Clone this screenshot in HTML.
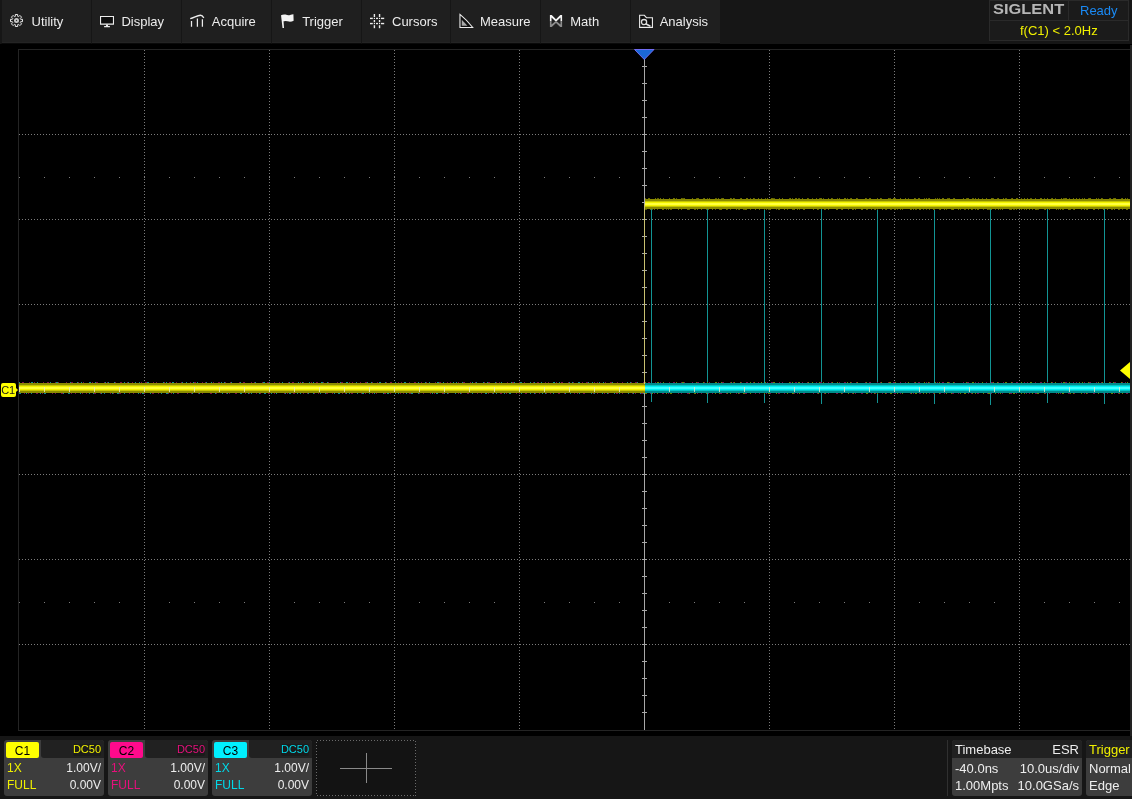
<!DOCTYPE html>
<html><head><meta charset="utf-8">
<style>
*{margin:0;padding:0;box-sizing:border-box}
html,body{width:1132px;height:799px;overflow:hidden;background:#000;font-family:"Liberation Sans",sans-serif;}
.abs{position:absolute}
#bar{position:absolute;left:0;top:0;width:1132px;height:44px;background:#161616}
.btn{position:absolute;top:0;height:44px;background:#1f1f1f;border-left:1px solid #161616;border-bottom:1px solid #0a0a0a}
.btn::after{content:"";position:absolute;left:0;right:0;top:42px;height:1px;background:#242424}
.btn span{position:absolute;top:15px;font-size:13px;line-height:13px;color:#ececec;white-space:nowrap}
.t{position:absolute;white-space:nowrap;line-height:12px}
.chbox{position:absolute;top:740px;width:100px;height:56px;background:#3d3d3d;border-radius:3px;overflow:hidden}
.chbox .hd{position:absolute;left:37px;top:0;width:63px;height:18px;background:#212121;border-bottom-left-radius:3px}
.chbox .lb{position:absolute;left:2px;top:2px;width:33px;height:16px;border-radius:2px;color:#000;font-size:12px;line-height:18px;text-align:center}
.chbox .r{position:absolute;right:3px;font-size:12px;line-height:12px;white-space:nowrap}
.chbox .l{position:absolute;left:3px;font-size:12px;line-height:12px;white-space:nowrap}
</style></head><body><div id="wrap" style="position:absolute;left:0;top:0;width:1132px;height:799px;will-change:transform">
<svg class="abs" style="left:0;top:0" width="1132" height="799" shape-rendering="crispEdges">
<rect x="18.5" y="49.5" width="1112" height="681" fill="none" stroke="#242424"/>
<rect x="1130" y="45" width="2" height="691" fill="#222"/>
<line x1="144.5" y1="50" x2="144.5" y2="730" stroke="#7c7c7c" stroke-dasharray="1 2"/>
<line x1="269.5" y1="50" x2="269.5" y2="730" stroke="#7c7c7c" stroke-dasharray="1 2"/>
<line x1="394.5" y1="50" x2="394.5" y2="730" stroke="#7c7c7c" stroke-dasharray="1 2"/>
<line x1="519.5" y1="50" x2="519.5" y2="730" stroke="#7c7c7c" stroke-dasharray="1 2"/>
<line x1="769.5" y1="50" x2="769.5" y2="730" stroke="#7c7c7c" stroke-dasharray="1 2"/>
<line x1="894.5" y1="50" x2="894.5" y2="730" stroke="#7c7c7c" stroke-dasharray="1 2"/>
<line x1="1019.5" y1="50" x2="1019.5" y2="730" stroke="#7c7c7c" stroke-dasharray="1 2"/>
<line x1="19" y1="134.5" x2="1130" y2="134.5" stroke="#7c7c7c" stroke-dasharray="1 2"/>
<line x1="19" y1="219.5" x2="1130" y2="219.5" stroke="#7c7c7c" stroke-dasharray="1 2"/>
<line x1="19" y1="304.5" x2="1130" y2="304.5" stroke="#7c7c7c" stroke-dasharray="1 2"/>
<line x1="19" y1="474.5" x2="1130" y2="474.5" stroke="#7c7c7c" stroke-dasharray="1 2"/>
<line x1="19" y1="559.5" x2="1130" y2="559.5" stroke="#7c7c7c" stroke-dasharray="1 2"/>
<line x1="19" y1="644.5" x2="1130" y2="644.5" stroke="#7c7c7c" stroke-dasharray="1 2"/>
<line x1="19" y1="177.5" x2="1130" y2="177.5" stroke="#7c7c7c" stroke-dasharray="1 24"/>
<line x1="19" y1="602.5" x2="1130" y2="602.5" stroke="#7c7c7c" stroke-dasharray="1 24"/>
<rect x="644" y="50" width="1" height="680" fill="#a8a8a8"/>
<rect x="19" y="389" width="1111" height="1" fill="#a8a8a8"/>
<rect x="642" y="66" width="5" height="1" fill="#a8a8a8"/>
<rect x="642" y="83" width="5" height="1" fill="#a8a8a8"/>
<rect x="642" y="100" width="5" height="1" fill="#a8a8a8"/>
<rect x="642" y="117" width="5" height="1" fill="#a8a8a8"/>
<rect x="642" y="134" width="5" height="1" fill="#a8a8a8"/>
<rect x="642" y="151" width="5" height="1" fill="#a8a8a8"/>
<rect x="642" y="168" width="5" height="1" fill="#a8a8a8"/>
<rect x="642" y="185" width="5" height="1" fill="#a8a8a8"/>
<rect x="642" y="202" width="5" height="1" fill="#a8a8a8"/>
<rect x="642" y="219" width="5" height="1" fill="#a8a8a8"/>
<rect x="642" y="236" width="5" height="1" fill="#a8a8a8"/>
<rect x="642" y="253" width="5" height="1" fill="#a8a8a8"/>
<rect x="642" y="270" width="5" height="1" fill="#a8a8a8"/>
<rect x="642" y="287" width="5" height="1" fill="#a8a8a8"/>
<rect x="642" y="304" width="5" height="1" fill="#a8a8a8"/>
<rect x="642" y="321" width="5" height="1" fill="#a8a8a8"/>
<rect x="642" y="338" width="5" height="1" fill="#a8a8a8"/>
<rect x="642" y="355" width="5" height="1" fill="#a8a8a8"/>
<rect x="642" y="372" width="5" height="1" fill="#a8a8a8"/>
<rect x="642" y="389" width="5" height="1" fill="#a8a8a8"/>
<rect x="642" y="406" width="5" height="1" fill="#a8a8a8"/>
<rect x="642" y="423" width="5" height="1" fill="#a8a8a8"/>
<rect x="642" y="440" width="5" height="1" fill="#a8a8a8"/>
<rect x="642" y="457" width="5" height="1" fill="#a8a8a8"/>
<rect x="642" y="474" width="5" height="1" fill="#a8a8a8"/>
<rect x="642" y="491" width="5" height="1" fill="#a8a8a8"/>
<rect x="642" y="508" width="5" height="1" fill="#a8a8a8"/>
<rect x="642" y="525" width="5" height="1" fill="#a8a8a8"/>
<rect x="642" y="542" width="5" height="1" fill="#a8a8a8"/>
<rect x="642" y="559" width="5" height="1" fill="#a8a8a8"/>
<rect x="642" y="576" width="5" height="1" fill="#a8a8a8"/>
<rect x="642" y="593" width="5" height="1" fill="#a8a8a8"/>
<rect x="642" y="610" width="5" height="1" fill="#a8a8a8"/>
<rect x="642" y="627" width="5" height="1" fill="#a8a8a8"/>
<rect x="642" y="644" width="5" height="1" fill="#a8a8a8"/>
<rect x="642" y="661" width="5" height="1" fill="#a8a8a8"/>
<rect x="642" y="678" width="5" height="1" fill="#a8a8a8"/>
<rect x="642" y="695" width="5" height="1" fill="#a8a8a8"/>
<rect x="642" y="712" width="5" height="1" fill="#a8a8a8"/>
<rect x="651" y="206" width="1" height="196" fill="#129494"/>
<rect x="707" y="206" width="1" height="197" fill="#129494"/>
<rect x="764" y="206" width="1" height="197" fill="#129494"/>
<rect x="821" y="206" width="1" height="198" fill="#129494"/>
<rect x="877" y="206" width="1" height="197" fill="#129494"/>
<rect x="934" y="206" width="1" height="198" fill="#129494"/>
<rect x="990" y="206" width="1" height="199" fill="#129494"/>
<rect x="1047" y="206" width="1" height="197" fill="#129494"/>
<rect x="1104" y="206" width="1" height="198" fill="#129494"/>
<line x1="19" y1="382.5" x2="645" y2="382.5" stroke="#138c8c" stroke-dasharray="1 3 1 7 2 4 1 9 1 2 1 5 2 8 1 3 1 6"/>
<line x1="22" y1="382.5" x2="645" y2="382.5" stroke="#7a0f4a" stroke-dasharray="2 5 1 4 1 8 1 3 2 6 1 2 1 7 1 4"/>
<rect x="19" y="383" width="626" height="2" fill="#8c8c00"/>
<rect x="19" y="385" width="626" height="1" fill="#c4c400"/>
<rect x="19" y="386" width="626" height="4" fill="#f2f200"/>
<rect x="19" y="387" width="626" height="2" fill="#ffff3c"/>
<rect x="19" y="390" width="626" height="1" fill="#c4c400"/>
<rect x="19" y="391" width="626" height="2" fill="#8c8c00"/>
<line x1="19" y1="393.5" x2="645" y2="393.5" stroke="#138c8c" stroke-dasharray="2 5 1 4 1 8 1 3 2 6 1 2 1 7 1 4"/>
<line x1="24" y1="393.5" x2="645" y2="393.5" stroke="#7a0f4a" stroke-dasharray="1 3 1 7 2 4 1 9 1 2 1 5 2 8 1 3 1 6"/>
<line x1="645" y1="382.5" x2="1130" y2="382.5" stroke="#6a8000" stroke-dasharray="1 3 1 7 2 4 1 9 1 2 1 5 2 8 1 3 1 6"/>
<line x1="648" y1="382.5" x2="1130" y2="382.5" stroke="#7a0f4a" stroke-dasharray="2 5 1 4 1 8 1 3 2 6 1 2 1 7 1 4"/>
<rect x="645" y="383" width="485" height="2" fill="#008c8c"/>
<rect x="645" y="385" width="485" height="1" fill="#00c4c4"/>
<rect x="645" y="386" width="485" height="4" fill="#00f2f2"/>
<rect x="645" y="387" width="485" height="2" fill="#40ffff"/>
<rect x="645" y="390" width="485" height="1" fill="#00c4c4"/>
<rect x="645" y="391" width="485" height="2" fill="#008c8c"/>
<line x1="645" y1="393.5" x2="1130" y2="393.5" stroke="#6a8000" stroke-dasharray="2 5 1 4 1 8 1 3 2 6 1 2 1 7 1 4"/>
<line x1="650" y1="393.5" x2="1130" y2="393.5" stroke="#7a0f4a" stroke-dasharray="1 3 1 7 2 4 1 9 1 2 1 5 2 8 1 3 1 6"/>
<line x1="645" y1="198.5" x2="1130" y2="198.5" stroke="#5c5c00" stroke-dasharray="1 3 1 7 2 4 1 9 1 2 1 5 2 8 1 3 1 6"/>
<line x1="648" y1="198.5" x2="1130" y2="198.5" stroke="#6e6e00" stroke-dasharray="2 5 1 4 1 8 1 3 2 6 1 2 1 7 1 4"/>
<rect x="645" y="199" width="485" height="2" fill="#8a8a00"/>
<rect x="645" y="201" width="485" height="1" fill="#c4c400"/>
<rect x="645" y="202" width="485" height="4" fill="#f4f400"/>
<rect x="645" y="203" width="485" height="2" fill="#ffff40"/>
<rect x="645" y="206" width="485" height="1" fill="#c4c400"/>
<rect x="645" y="207" width="485" height="2" fill="#8a8a00"/>
<line x1="645" y1="209.5" x2="1130" y2="209.5" stroke="#5c5c00" stroke-dasharray="2 5 1 4 1 8 1 3 2 6 1 2 1 7 1 4"/>
<line x1="650" y1="209.5" x2="1130" y2="209.5" stroke="#6e6e00" stroke-dasharray="1 3 1 7 2 4 1 9 1 2 1 5 2 8 1 3 1 6"/>
<rect x="644" y="204" width="1" height="180" fill="#c8c070"/>
<rect x="19" y="387" width="1" height="5" fill="#e8e8c8" opacity="0.8"/>
<rect x="44" y="387" width="1" height="5" fill="#e8e8c8" opacity="0.8"/>
<rect x="69" y="387" width="1" height="5" fill="#e8e8c8" opacity="0.8"/>
<rect x="94" y="387" width="1" height="5" fill="#e8e8c8" opacity="0.8"/>
<rect x="119" y="387" width="1" height="5" fill="#e8e8c8" opacity="0.8"/>
<rect x="144" y="387" width="1" height="5" fill="#e8e8c8" opacity="0.8"/>
<rect x="169" y="387" width="1" height="5" fill="#e8e8c8" opacity="0.8"/>
<rect x="194" y="387" width="1" height="5" fill="#e8e8c8" opacity="0.8"/>
<rect x="219" y="387" width="1" height="5" fill="#e8e8c8" opacity="0.8"/>
<rect x="244" y="387" width="1" height="5" fill="#e8e8c8" opacity="0.8"/>
<rect x="269" y="387" width="1" height="5" fill="#e8e8c8" opacity="0.8"/>
<rect x="294" y="387" width="1" height="5" fill="#e8e8c8" opacity="0.8"/>
<rect x="319" y="387" width="1" height="5" fill="#e8e8c8" opacity="0.8"/>
<rect x="344" y="387" width="1" height="5" fill="#e8e8c8" opacity="0.8"/>
<rect x="369" y="387" width="1" height="5" fill="#e8e8c8" opacity="0.8"/>
<rect x="394" y="387" width="1" height="5" fill="#e8e8c8" opacity="0.8"/>
<rect x="419" y="387" width="1" height="5" fill="#e8e8c8" opacity="0.8"/>
<rect x="444" y="387" width="1" height="5" fill="#e8e8c8" opacity="0.8"/>
<rect x="469" y="387" width="1" height="5" fill="#e8e8c8" opacity="0.8"/>
<rect x="494" y="387" width="1" height="5" fill="#e8e8c8" opacity="0.8"/>
<rect x="519" y="387" width="1" height="5" fill="#e8e8c8" opacity="0.8"/>
<rect x="544" y="387" width="1" height="5" fill="#e8e8c8" opacity="0.8"/>
<rect x="569" y="387" width="1" height="5" fill="#e8e8c8" opacity="0.8"/>
<rect x="594" y="387" width="1" height="5" fill="#e8e8c8" opacity="0.8"/>
<rect x="619" y="387" width="1" height="5" fill="#e8e8c8" opacity="0.8"/>
<rect x="669" y="387" width="1" height="5" fill="#e8e8c8" opacity="0.8"/>
<rect x="694" y="387" width="1" height="5" fill="#e8e8c8" opacity="0.8"/>
<rect x="719" y="387" width="1" height="5" fill="#e8e8c8" opacity="0.8"/>
<rect x="744" y="387" width="1" height="5" fill="#e8e8c8" opacity="0.8"/>
<rect x="769" y="387" width="1" height="5" fill="#e8e8c8" opacity="0.8"/>
<rect x="794" y="387" width="1" height="5" fill="#e8e8c8" opacity="0.8"/>
<rect x="819" y="387" width="1" height="5" fill="#e8e8c8" opacity="0.8"/>
<rect x="844" y="387" width="1" height="5" fill="#e8e8c8" opacity="0.8"/>
<rect x="869" y="387" width="1" height="5" fill="#e8e8c8" opacity="0.8"/>
<rect x="894" y="387" width="1" height="5" fill="#e8e8c8" opacity="0.8"/>
<rect x="919" y="387" width="1" height="5" fill="#e8e8c8" opacity="0.8"/>
<rect x="944" y="387" width="1" height="5" fill="#e8e8c8" opacity="0.8"/>
<rect x="969" y="387" width="1" height="5" fill="#e8e8c8" opacity="0.8"/>
<rect x="994" y="387" width="1" height="5" fill="#e8e8c8" opacity="0.8"/>
<rect x="1019" y="387" width="1" height="5" fill="#e8e8c8" opacity="0.8"/>
<rect x="1044" y="387" width="1" height="5" fill="#e8e8c8" opacity="0.8"/>
<rect x="1069" y="387" width="1" height="5" fill="#e8e8c8" opacity="0.8"/>
<rect x="1094" y="387" width="1" height="5" fill="#e8e8c8" opacity="0.8"/>
<rect x="1119" y="387" width="1" height="5" fill="#e8e8c8" opacity="0.8"/>
<polygon points="634.5,49.5 654,49.5 644.25,59.5" fill="#1a68d8" stroke="#7b70ff" stroke-width="0.9" shape-rendering="geometricPrecision"/>
<polygon points="1120,370.5 1130,362 1130,379" fill="#ffff00" shape-rendering="geometricPrecision"/>
<path d="M3,383 H14 Q16,383 16,385 V388 L18,390 L16,392 V395 Q16,397 14,397 H3 Q1,397 1,395 V385 Q1,383 3,383 Z" fill="#ffff00" shape-rendering="geometricPrecision"/>
</svg>
<div class="abs" style="left:1px;top:384px;width:14px;font-size:11px;line-height:12px;color:#1a1a1a;text-align:center;letter-spacing:-0.3px">C1</div>
<div id="bar"></div>
<div class="btn" style="left:1.000px;width:89.875px"><span style="left:29.5px">Utility</span></div>
<div class="btn" style="left:90.875px;width:89.875px"><span style="left:29.5px">Display</span></div>
<div class="btn" style="left:180.750px;width:89.875px"><span style="left:30px">Acquire</span></div>
<div class="btn" style="left:270.625px;width:89.875px"><span style="left:30.5px">Trigger</span></div>
<div class="btn" style="left:360.500px;width:89.875px"><span style="left:30.5px">Cursors</span></div>
<div class="btn" style="left:450.375px;width:89.875px"><span style="left:28.5px">Measure</span></div>
<div class="btn" style="left:540.250px;width:89.875px"><span style="left:29px">Math</span></div>
<div class="btn" style="left:630.125px;width:89.875px"><span style="left:28.5px">Analysis</span></div>
<svg class="abs" style="left:0;top:0" width="720" height="44"><g transform="translate(10,14)" shape-rendering="geometricPrecision"><path d="M5.30,2.37 L5.30,0.52 L7.70,0.52 L7.70,2.37 A4.3,4.3 0 0 1 8.57,2.73 L9.88,1.42 L11.58,3.12 L10.27,4.43 A4.3,4.3 0 0 1 10.63,5.30 L12.48,5.30 L12.48,7.70 L10.63,7.70 A4.3,4.3 0 0 1 10.27,8.57 L11.58,9.88 L9.88,11.58 L8.57,10.27 A4.3,4.3 0 0 1 7.70,10.63 L7.70,12.48 L5.30,12.48 L5.30,10.63 A4.3,4.3 0 0 1 4.43,10.27 L3.12,11.58 L1.42,9.88 L2.73,8.57 A4.3,4.3 0 0 1 2.37,7.70 L0.52,7.70 L0.52,5.30 L2.37,5.30 A4.3,4.3 0 0 1 2.73,4.43 L1.42,3.12 L3.12,1.42 L4.43,2.73 A4.3,4.3 0 0 1 5.30,2.37Z" fill="none" stroke="#ececec" stroke-width="1.0"/><circle cx="6.5" cy="6.5" r="2.5" fill="#c8c8c8"/><circle cx="6.5" cy="6.5" r="0.7" fill="#333"/></g>
<g transform="translate(100,14)" shape-rendering="geometricPrecision"><rect x="1" y="3" width="12" height="6.6" fill="#0e0e0e"/><path d="M0,2 H14 V10.8 H0 Z M1.1,3.1 V9.5 H12.9 V3.1 Z" fill="#ececec" fill-rule="evenodd"/><rect x="6" y="10.5" width="2" height="1.8" fill="#ececec"/><rect x="4" y="12" width="6" height="1.2" rx="0.5" fill="#ececec"/></g>
<g transform="translate(189.75,14)" shape-rendering="geometricPrecision" fill="none" stroke="#ececec"><path d="M0.45,4.6 C4.25,4 7.25,1.3 10.75,1.3 C12.25,1.3 13.25,2.5 14.05,3.8" stroke-width="1.4"/><path d="M1.75,7 V12.8 M7.65,4.4 V12.8 M12.65,5.2 V12.8" stroke-width="1.25"/></g>
<g transform="translate(279.625,14)" shape-rendering="geometricPrecision"><path d="M1.4,1.2 Q3.4,0.2 5.9,0.6 Q8.4,1.5 10.4,1 Q12.4,0.3 13.8,0.2 L14,6.8 Q11.9,7.8 9.4,7.6 Q6.9,6.8 4.4,7.2 L3.9,7.3 L4.4,14 L2.9,14 Z" fill="#f4f4f4"/></g>
<g transform="translate(369.5,14)" shape-rendering="geometricPrecision" fill="#ececec"><rect x="4.2" y="0" width="1.4" height="3"/><rect x="4.2" y="6" width="1.4" height="2.1999999999999993"/><rect x="4.2" y="11.2" width="1.4" height="3.0"/><rect x="9.35" y="0" width="1.4" height="3"/><rect x="9.35" y="6" width="1.4" height="2.1999999999999993"/><rect x="9.35" y="11.2" width="1.4" height="3.0"/><rect x="0.5" y="3.7" width="2.8" height="1.4"/><rect x="6.5" y="3.7" width="2.0" height="1.4"/><rect x="11.5" y="3.7" width="3.1999999999999993" height="1.4"/><rect x="0.5" y="8.85" width="2.8" height="1.4"/><rect x="6.5" y="8.85" width="2.0" height="1.4"/><rect x="11.5" y="8.85" width="3.1999999999999993" height="1.4"/><rect x="4.3" y="3.8000000000000003" width="1.2" height="1.2"/><rect x="4.3" y="8.95" width="1.2" height="1.2"/><rect x="9.45" y="3.8000000000000003" width="1.2" height="1.2"/><rect x="9.45" y="8.95" width="1.2" height="1.2"/></g>
<g transform="translate(459.375,14)" shape-rendering="geometricPrecision"><path d="M0.6,0.4 V13.5 H13.4 Q8,6.5 0.6,0.4 Z" fill="#0e0e0e" stroke="#ececec" stroke-width="1.1"/><path d="M2.4,5.8 V11.7 H8.1 Z" fill="#a8a8a8"/></g>
<g transform="translate(549.25,14)" shape-rendering="geometricPrecision"><polygon points="0.65,0.90 2.50,0.90 6.75,5.20 11.00,0.90 12.85,0.90 12.85,7.20 11.25,7.20 11.25,3.50 7.30,7.20 6.20,7.20 2.25,3.50 2.25,7.20 0.65,7.20" fill="#f4f4f4"/><polygon points="0.65,13.00 2.50,13.00 6.75,9.04 11.00,13.00 12.85,13.00 12.85,7.20 11.25,7.20 11.25,10.60 7.30,7.20 6.20,7.20 2.25,10.60 2.25,7.20 0.65,7.20" fill="#8c8c8c"/></g>
<g transform="translate(639.125,14)" shape-rendering="geometricPrecision"><path d="M0.5,1.3 H5.2 L7.3,3.7 H13.3 V13.4 H0.5 Z" fill="#0e0e0e" stroke="#ececec" stroke-width="1.1"/><circle cx="4.9" cy="8.1" r="2.6" fill="none" stroke="#dcdcdc" stroke-width="1.3"/><path d="M7,10 L10.8,12" stroke="#dcdcdc" stroke-width="1.6" stroke-linecap="round"/></g></svg>
<div class="abs" style="left:989px;top:0;width:140px;height:41px;background:#1b1b1b;border:1px solid #2a2a2a"></div>
<div class="abs" style="left:990px;top:20px;width:138px;height:1px;background:#2a2a2a"></div>
<div class="abs" style="left:1068px;top:1px;width:1px;height:19px;background:#2a2a2a"></div>
<div class="t" style="left:993px;top:1.4px;font-size:15.5px;line-height:15px;font-weight:bold;color:#b6b6b6;transform:scaleX(1.06);transform-origin:0 0">SIGLENT</div>
<div class="t" style="left:1080px;top:4px;font-size:13px;line-height:13px;color:#1a8af5">Ready</div>
<div class="t" style="left:1020px;top:24px;font-size:13px;line-height:13px;color:#f0f000">f(C1) &lt; 2.0Hz</div>
<div class="abs" style="left:0;top:736px;width:1132px;height:63px;background:#161616"></div>
<div class="chbox" style="left:4px"><div class="hd"><div style="position:absolute;left:32px;top:3.5px;width:28px;height:12px;background:#1b1b1b;border-radius:2px"></div></div><div class="lb" style="background:#ffff00">C1</div>
<div class="r" style="top:3px;color:#f0f000;font-size:11px">DC50</div>
<div class="l" style="top:22px;color:#f0f000">1X</div><div class="r" style="top:22px;color:#eee">1.00V/</div>
<div class="l" style="top:39px;color:#f0f000">FULL</div><div class="r" style="top:39px;color:#eee">0.00V</div></div>
<div class="chbox" style="left:108px"><div class="hd"><div style="position:absolute;left:32px;top:3.5px;width:28px;height:12px;background:#1b1b1b;border-radius:2px"></div></div><div class="lb" style="background:#ff0a8c">C2</div>
<div class="r" style="top:3px;color:#e6107c;font-size:11px">DC50</div>
<div class="l" style="top:22px;color:#e6107c">1X</div><div class="r" style="top:22px;color:#eee">1.00V/</div>
<div class="l" style="top:39px;color:#e6107c">FULL</div><div class="r" style="top:39px;color:#eee">0.00V</div></div>
<div class="chbox" style="left:212px"><div class="hd"><div style="position:absolute;left:32px;top:3.5px;width:28px;height:12px;background:#1b1b1b;border-radius:2px"></div></div><div class="lb" style="background:#00f0ff">C3</div>
<div class="r" style="top:3px;color:#00d8e8;font-size:11px">DC50</div>
<div class="l" style="top:22px;color:#00d8e8">1X</div><div class="r" style="top:22px;color:#eee">1.00V/</div>
<div class="l" style="top:39px;color:#00d8e8">FULL</div><div class="r" style="top:39px;color:#eee">0.00V</div></div>
<div class="abs" style="left:316px;top:740px;width:100px;height:56px;background:#131313"></div>
<svg class="abs" style="left:316px;top:740px" width="100" height="56" shape-rendering="crispEdges"><rect x="0.5" y="0.5" width="99" height="55" fill="none" stroke="#6a6a6a" stroke-dasharray="1 2"/></svg>
<div class="abs" style="left:340px;top:768px;width:52px;height:1px;background:#8a8a8a"></div>
<div class="abs" style="left:366px;top:753px;width:1px;height:30px;background:#8a8a8a"></div>
<div class="abs" style="left:947px;top:740px;width:1px;height:56px;background:#303030"></div>
<div class="chbox" style="left:952px;width:130px"><div class="hd" style="left:0;width:130px;border-radius:0"></div>
<div class="l" style="top:3px;color:#eee;font-size:13px;line-height:13px">Timebase</div><div class="r" style="top:3px;color:#eee;font-size:13px;line-height:13px">ESR</div>
<div class="l" style="top:22px;color:#eee;font-size:13px;line-height:13px">-40.0ns</div><div class="r" style="top:22px;color:#eee;font-size:13px;line-height:13px">10.0us/div</div>
<div class="l" style="top:39px;color:#eee;font-size:13px;line-height:13px">1.00Mpts</div><div class="r" style="top:39px;color:#eee;font-size:13px;line-height:13px">10.0GSa/s</div></div>
<div class="chbox" style="left:1086px;width:60px"><div class="hd" style="left:0;width:60px;border-radius:0"></div>
<div class="l" style="top:3px;color:#f0f000;font-size:13px;line-height:13px">Trigger</div>
<div class="l" style="top:22px;color:#eee;font-size:13px;line-height:13px">Normal</div>
<div class="l" style="top:39px;color:#eee;font-size:13px;line-height:13px">Edge</div></div>
</div></body></html>
